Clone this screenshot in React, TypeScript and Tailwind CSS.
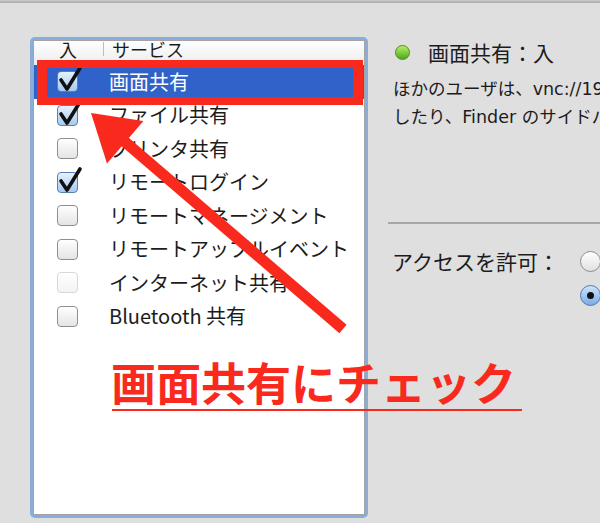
import clsx from "clsx";

type Service = { label: string; checked: boolean; selected?: boolean; disabled?: boolean };

const services: Service[] = [
  { label: "画面共有", checked: true, selected: true },
  { label: "ファイル共有", checked: true },
  { label: "プリンタ共有", checked: false },
  { label: "リモートログイン", checked: true },
  { label: "リモートマネージメント", checked: false },
  { label: "リモートアップルイベント", checked: false },
  { label: "インターネット共有", checked: false, disabled: true },
  { label: "Bluetooth 共有", checked: false },
];

function CheckBox({ checked, disabled }: { checked: boolean; disabled?: boolean }) {
  return (
    <span
      className={clsx(
        "relative block w-[21px] h-[21px] shrink-0 rounded-[4px] border",
        checked
          ? "border-[#5b7fae] bg-linear-to-b from-[#e6f1fd] to-[#a6cbf1]"
          : disabled
          ? "border-[#d8d8d8] bg-linear-to-b from-white to-[#f3f3f3]"
          : "border-[#8f8f8f] bg-linear-to-b from-white to-[#e4e4e4]"
      )}
    >
      {checked && (
        <svg className="absolute -left-[1px] -top-[7px]" width="26" height="28" viewBox="0 0 26 28">
          <path
            d="M4 15 L10 24 L23 3"
            fill="none"
            stroke="#111"
            strokeWidth="3.6"
            strokeLinecap="round"
            strokeLinejoin="round"
          />
        </svg>
      )}
    </span>
  );
}

function Radio({ on }: { on?: boolean }) {
  return (
    <span
      className={clsx(
        "flex items-center justify-center w-[21px] h-[21px] rounded-full border",
        on
          ? "border-[#4f79b0] bg-linear-to-b from-[#cfe3f8] to-[#78ace7]"
          : "border-[#8c8c8c] bg-linear-to-b from-white to-[#e0e0e0]"
      )}
    >
      {on && <span className="block w-[7px] h-[7px] rounded-full bg-[#111]" />}
    </span>
  );
}

export default function App() {
  return (
    <div
      className="relative w-[600px] h-[523px] overflow-hidden bg-[#dfdfdf] text-[#1c1c1c]"
      style={{ fontFamily: '"Noto Sans CJK JP", "Noto Sans", sans-serif' }}
    >
      <div className="h-[3px] bg-linear-to-b from-[#cdcdcd] to-[#a7a7a7]" />

      <div className="flex">
        {/* service list */}
        <div className="pl-[30px] pt-[34px]">
          <div className="w-[338px] h-[481px] rounded-[5px] border-[3px] border-[#89addb]">
            <div className="h-full border border-[#a4a4a4] bg-white">
              <div className="flex items-start h-[24px] bg-linear-to-b from-white to-[#ececec] text-[18px] leading-[16px]">
                <span className="ml-[25px] w-[18px]">入</span>
                <span className="ml-[26px] mt-[1px] w-px h-[14px] bg-[#bdbdbd]" />
                <span className="ml-[8px]">サービス</span>
              </div>
              {services.map((s) => (
                <div
                  key={s.label}
                  className={clsx(
                    "flex items-center h-[33.5px] text-[20px] leading-none whitespace-nowrap",
                    s.selected && "bg-[#3162c9] text-white"
                  )}
                >
                  <span className="ml-[23px]">
                    <CheckBox checked={s.checked} disabled={s.disabled} />
                  </span>
                  <span className="ml-[31px]">{s.label}</span>
                </div>
              ))}
            </div>
          </div>
        </div>

        {/* detail panel */}
        <div className="flex-1 min-w-0 pl-[20px] pt-[37px]">
          <div className="flex items-center h-[24px]">
            <span className="ml-[7px] block w-[15px] h-[15px] rounded-full border border-[#4f8a24] bg-linear-to-b from-[#b2f067] to-[#4da912]" />
            <span className="ml-[18px] text-[21px] leading-none whitespace-nowrap">画面共有：入</span>
          </div>
          <div
            className="ml-[5px] mt-[11px] text-[17.5px] leading-[28px] whitespace-nowrap"
            style={{ fontFamily: '"DejaVu Sans", "Noto Sans CJK JP", sans-serif' }}
          >
            <div>ほかのユーザは、vnc://192.168.0.5/ でこのコンピュータの画面にアクセス</div>
            <div>したり、Finder のサイドバーでこのコンピュータを探してアクセスできます。</div>
          </div>
          <div className="mt-[91px] h-[2px] bg-[#a7a7a7]" />
          <div className="mt-[27px] ml-[4px] flex items-start">
            <span className="w-[188px] shrink-0 text-[21px] leading-[21px] whitespace-nowrap">アクセスを許可：</span>
            <div className="flex flex-col gap-[13px]">
              <Radio />
              <Radio on />
            </div>
          </div>
        </div>
      </div>

      {/* annotations */}
      <div className="absolute left-[37px] top-[60px] w-[326px] h-[45px] border-x-[10px] border-y-[8px] border-[#f9291d]" />

      <svg className="absolute left-0 top-0 pointer-events-none" width="600" height="523" viewBox="0 0 600 523">
        <line x1="343" y1="329" x2="124" y2="141" stroke="#f9291d" strokeWidth="11" />
        <polygon points="91,113 143.4,121 107,163.6" fill="#f9291d" />
      </svg>

      <div className="absolute left-[111px] top-[359px] flex flex-col">
        <span className="text-[45px] leading-[45px] font-bold text-[#f9291d] whitespace-nowrap">
          画面共有にチェック
        </span>
        <span className="mt-[5px] ml-[1px] w-[410px] h-[2px] bg-[#f9291d]" />
      </div>
    </div>
  );
}
